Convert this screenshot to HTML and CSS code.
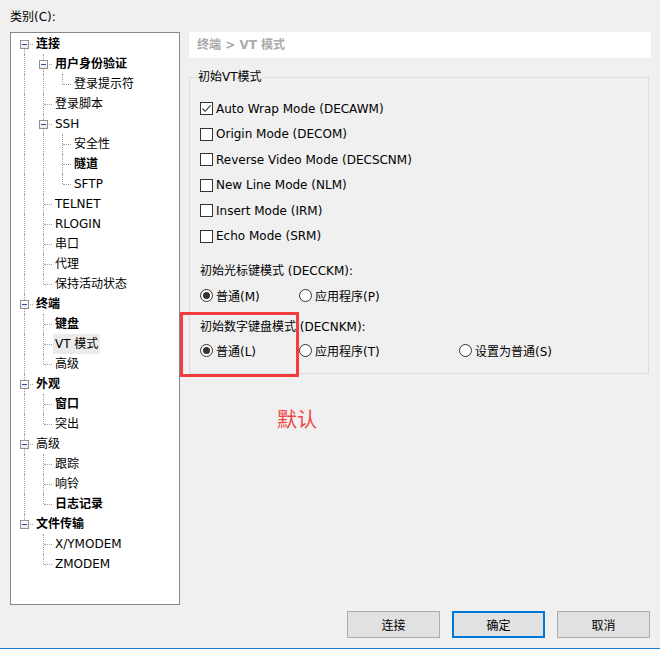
FILE: index.html
```html
<!DOCTYPE html>
<html lang="zh-CN">
<head>
<meta charset="utf-8">
<title>会话选项</title>
<link rel="stylesheet" href="styles.css">
</head>
<body>
<div class="window">
  <div class="cat-label">类别(C):</div>
  <div class="main">
    <div class="tree">
      <div class="row"><span class="c f"><span class="box"></span></span><span class="lbl b">连接</span></div>
      <div class="row"><span class="c v"></span><span class="c t"><span class="box"></span></span><span class="lbl b">用户身份验证</span></div>
      <div class="row"><span class="c v"></span><span class="c v"></span><span class="c l"></span><span class="lbl">登录提示符</span></div>
      <div class="row"><span class="c v"></span><span class="c t"></span><span class="lbl">登录脚本</span></div>
      <div class="row"><span class="c v"></span><span class="c t"><span class="box"></span></span><span class="lbl">SSH</span></div>
      <div class="row"><span class="c v"></span><span class="c v"></span><span class="c t"></span><span class="lbl">安全性</span></div>
      <div class="row"><span class="c v"></span><span class="c v"></span><span class="c t"></span><span class="lbl b">隧道</span></div>
      <div class="row"><span class="c v"></span><span class="c v"></span><span class="c l"></span><span class="lbl">SFTP</span></div>
      <div class="row"><span class="c v"></span><span class="c t"></span><span class="lbl">TELNET</span></div>
      <div class="row"><span class="c v"></span><span class="c t"></span><span class="lbl">RLOGIN</span></div>
      <div class="row"><span class="c v"></span><span class="c t"></span><span class="lbl">串口</span></div>
      <div class="row"><span class="c v"></span><span class="c t"></span><span class="lbl">代理</span></div>
      <div class="row"><span class="c v"></span><span class="c l"></span><span class="lbl">保持活动状态</span></div>
      <div class="row"><span class="c t"><span class="box"></span></span><span class="lbl b">终端</span></div>
      <div class="row"><span class="c v"></span><span class="c t"></span><span class="lbl b">键盘</span></div>
      <div class="row"><span class="c v"></span><span class="c t"></span><span class="lbl sel">VT 模式</span></div>
      <div class="row"><span class="c v"></span><span class="c l"></span><span class="lbl">高级</span></div>
      <div class="row"><span class="c t"><span class="box"></span></span><span class="lbl b">外观</span></div>
      <div class="row"><span class="c v"></span><span class="c t"></span><span class="lbl b">窗口</span></div>
      <div class="row"><span class="c v"></span><span class="c l"></span><span class="lbl">突出</span></div>
      <div class="row"><span class="c t"><span class="box"></span></span><span class="lbl">高级</span></div>
      <div class="row"><span class="c v"></span><span class="c t"></span><span class="lbl">跟踪</span></div>
      <div class="row"><span class="c v"></span><span class="c t"></span><span class="lbl">响铃</span></div>
      <div class="row"><span class="c v"></span><span class="c l"></span><span class="lbl b">日志记录</span></div>
      <div class="row"><span class="c l"><span class="box"></span></span><span class="lbl b">文件传输</span></div>
      <div class="row"><span class="c e"></span><span class="c t"></span><span class="lbl">X/YMODEM</span></div>
      <div class="row"><span class="c e"></span><span class="c l"></span><span class="lbl">ZMODEM</span></div>
    </div>
    <div class="panel">
      <div class="crumb">终端 &gt; VT 模式</div>
      <fieldset class="group">
        <legend>初始VT模式</legend>
        <div class="checks">
          <div class="opt"><span class="cb"><svg viewBox="0 0 11 11" width="11" height="11"><path d="M1.5 5.5 L4.2 8.3 L9.6 2.4" fill="none" stroke="#333" stroke-width="1.1"/></svg></span><span>Auto Wrap Mode (DECAWM)</span></div>
          <div class="opt"><span class="cb"></span><span>Origin Mode (DECOM)</span></div>
          <div class="opt"><span class="cb"></span><span>Reverse Video Mode (DECSCNM)</span></div>
          <div class="opt"><span class="cb"></span><span>New Line Mode (NLM)</span></div>
          <div class="opt"><span class="cb"></span><span>Insert Mode (IRM)</span></div>
          <div class="opt"><span class="cb"></span><span>Echo Mode (SRM)</span></div>
        </div>
        <div class="sub sub1">初始光标键模式 (DECCKM):</div>
        <div class="radios r1">
          <div class="opt"><span class="rb on"></span><span>普通(M)</span></div>
          <div class="opt"><span class="rb"></span><span>应用程序(P)</span></div>
        </div>
        <div class="sub sub2">初始数字键盘模式 (DECNKM):</div>
        <div class="radios r2">
          <div class="opt"><span class="rb on"></span><span>普通(L)</span></div>
          <div class="opt"><span class="rb"></span><span>应用程序(T)</span></div>
          <div class="opt"><span class="rb"></span><span>设置为普通(S)</span></div>
        </div>
      </fieldset>
      <div class="note">默认</div>
    </div>
  </div>
  <div class="footer">
    <button class="btn">连接</button>
    <button class="btn primary">确定</button>
    <button class="btn">取消</button>
  </div>
  <div class="mark"></div>
</div>
</body>
</html>
```

FILE: styles.css
```css
* { box-sizing: border-box; }
html, body { margin: 0; padding: 0; }
body {
  background: #f0f0f0;
  font-family: "DejaVu Sans", "Noto Sans CJK SC", sans-serif;
  font-size: 12px;
  color: #000;
}
.window {
  position: relative;
  width: 660px;
  height: 649px;
  padding: 8px 0 0 10px;
  border-bottom: 1px solid #1a7fd8;
  overflow: hidden;
}
.cat-label {
  height: 18px;
  line-height: 18px;
  margin-bottom: 6px;
}
.main {
  display: flex;
  gap: 9px;
  height: 573px;
}
.tree {
  width: 170px;
  height: 573px;
  background: #fff;
  border: 1px solid #828790;
  padding: 1px 0 0 4px;
  flex: none;
}
.row {
  display: flex;
  height: 20px;
  line-height: 20px;
}
.c {
  width: 19px;
  flex: none;
  position: relative;
}
.v::before, .t::before, .l::before, .f::before {
  content: "";
  position: absolute;
  left: 9px;
  top: 0;
  bottom: 0;
  border-left: 1px dotted #a0a0a0;
}
.l::before { bottom: 10px; }
.f::before { top: 10px; }
.t::after, .l::after, .f::after {
  content: "";
  position: absolute;
  left: 10px;
  right: 1px;
  top: 10px;
  border-top: 1px dotted #a0a0a0;
}
.box {
  position: absolute;
  left: 5px;
  top: 6px;
  width: 9px;
  height: 9px;
  border: 1px solid #919191;
  background: linear-gradient(#fff, #e8e8e8);
  z-index: 1;
}
.box::after {
  content: "";
  position: absolute;
  left: 1px;
  top: 3px;
  width: 5px;
  height: 1px;
  background: #2c4f8c;
}
.lbl {
  padding: 0 2px;
  white-space: nowrap;
}
.lbl.b { font-weight: bold; }
.lbl.sel { background: #ebebeb; }
.panel {
  width: 462px;
  flex: none;
}
.crumb {
  height: 26px;
  line-height: 26px;
  background: #fff;
  padding-left: 8px;
  color: #ababab;
  font-weight: bold;
}
.group {
  margin: 11px 2px 0 0;
  border: 1px solid #dcdcdc;
  padding: 11px 0 13px 10px;
  min-width: 0;
}
.group legend {
  line-height: 16px;
  padding: 0 1px;
  margin-left: -3px;
}
.opt {
  display: flex;
  align-items: center;
  white-space: nowrap;
}
.checks .opt { height: 25.5px; }
.cb, .rb {
  width: 13px;
  height: 13px;
  border: 1px solid #333;
  background: #fff;
  margin-right: 3px;
  flex: none;
  display: flex;
  align-items: center;
  justify-content: center;
}
.rb { border-radius: 50%; }
.rb.on::after {
  content: "";
  width: 7px;
  height: 7px;
  border-radius: 50%;
  background: #333;
}
.sub { height: 20px; line-height: 20px; }
.sub1 { margin-top: 12px; }
.sub2 { margin-top: 12px; }
.radios {
  display: grid;
  grid-template-columns: 99px 160px auto;
  height: 20px;
}
.r1 { margin-top: 4px; }
.r2 { margin-top: 3px; }
.note {
  margin-top: 35px;
  padding-left: 88px;
  color: #f04545;
  font-family: "Noto Sans CJK SC", sans-serif;
  font-size: 20px;
  line-height: 20px;
  font-weight: 400;
}
.footer {
  display: flex;
  justify-content: flex-end;
  gap: 12px;
  margin-top: 6px;
  padding-right: 10px;
}
.btn {
  width: 93px;
  height: 27px;
  background: #e1e1e1;
  border: 1px solid #adadad;
  font-family: "Noto Sans CJK SC", sans-serif;
  font-size: 12px;
  color: #000;
  padding: 0;
}
.btn.primary { border: 2px solid #0078d7; }
.mark {
  position: absolute;
  left: 180px;
  top: 312px;
  width: 119px;
  height: 65px;
  border: 3px solid #f43d3d;
}
```
